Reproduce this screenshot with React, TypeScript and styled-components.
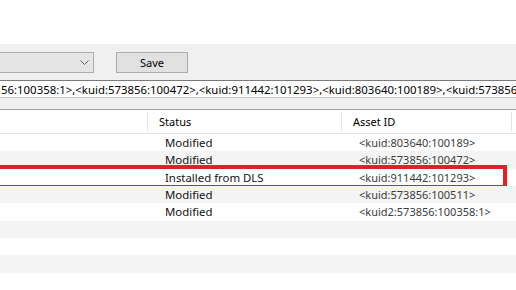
import * as React from 'react';
import styled, { createGlobalStyle } from 'styled-components';

const GlobalStyle = createGlobalStyle`
  html, body {
    margin: 0;
    padding: 0;
    background: #ffffff;
    overflow: hidden;
  }
  body {
    font-family: "Noto Sans", "Liberation Sans", sans-serif;
    color: #000;
  }
`

const ROW_HEIGHT = 17.33;

const Window = styled.div`
  width: 516px;
  height: 290px;
  overflow: hidden;
  display: flex;
  flex-direction: column;
  background: #ffffff;
`

const TopBlank = styled.div`
  height: 44px;
  background: #ffffff;
  flex-shrink: 0;
`

const Toolbar = styled.div`
  background: #f0f0f0;
  padding-top: 8px;
  height: 57px;
  flex-shrink: 0;
  display: flex;
  flex-direction: column;
  gap: 7px;
`

const ControlsRow = styled.div`
  display: flex;
  align-items: center;
  gap: 22px;
`

const Combo = styled.div`
  width: 98px;
  height: 19px;
  margin-left: -10px;
  background: #e5e5e5;
  border: 1px solid #acacac;
  display: flex;
  align-items: center;
  justify-content: flex-end;
  padding-right: 4px;
  box-sizing: content-box;
`

const SaveButton = styled.button`
  width: 72px;
  height: 21px;
  background: #e1e1e1;
  border: 1px solid #adadad;
  font-family: "Noto Sans", "Liberation Sans", sans-serif;
  font-size: 11px;
  color: #000;
  padding: 0;
  display: flex;
  align-items: center;
  justify-content: center;
`

const TextField = styled.div`
  height: 16px;
  margin-left: -4px;
  margin-right: -20px;
  background: #ffffff;
  border: 1px solid #7a7a7a;
  border-bottom-color: #c8c8c8;
  display: flex;
  align-items: center;
  padding-left: 4px;
  font-size: 11.4px;
  white-space: nowrap;
  overflow: hidden;
  box-sizing: content-box;
`

const List = styled.div`
  border-top: 1px solid #a0a0a0;
  flex: 1;
  background: #ffffff;
  position: relative;
`

const Header = styled.div`
  height: 23px;
  display: grid;
  grid-template-columns: 147px 194px 170px 5px;
  border-bottom: 1px solid #e5e5e5;
  background: #ffffff;
`

const HeaderCell = styled.div<{ $first?: boolean }>`
  display: flex;
  align-items: center;
  padding-left: 11px;
  font-size: 11px;
  border-left: ${p => (p.$first ? 'none' : '1px solid #e5e5e5')};
  margin: 2px 0;
`

const Row = styled.div<{ $alt?: boolean }>`
  height: ${ROW_HEIGHT}px;
  display: grid;
  grid-template-columns: 147px 194px 175px;
  background: ${p => (p.$alt ? '#f4f4f4' : '#ffffff')};
  position: relative;
  font-size: 11.4px;
`

const Cell = styled.div<{ $muted?: boolean }>`
  display: flex;
  align-items: center;
  padding-left: 18px;
  color: ${p => (p.$muted ? '#3c3c3c' : '#111')};
  font-size: ${p => (p.$muted ? '11px' : 'inherit')};
  white-space: nowrap;
`

const Highlight = styled.div`
  position: absolute;
  left: -10px;
  right: 9px;
  top: -3.7px;
  bottom: -3px;
  border: 4px solid #ea1c24;
  pointer-events: none;
`

const rows: { status: string; id: string }[] = [
  { status: 'Modified', id: '<kuid:803640:100189>' },
  { status: 'Modified', id: '<kuid:573856:100472>' },
  { status: 'Installed from DLS', id: '<kuid:911442:101293>' },
  { status: 'Modified', id: '<kuid:573856:100511>' },
  { status: 'Modified', id: '<kuid2:573856:100358:1>' },
  { status: '', id: '' },
  { status: '', id: '' },
  { status: '', id: '' },
  { status: '', id: '' },
];

function Chevron() {
  return (
    <svg width="9" height="6" viewBox="0 0 9 6">
      <path d="M0.5 0.5 L4.5 4.5 L8.5 0.5" fill="none" stroke="#606060" strokeWidth="1" />
    </svg>
  );
}

export default function App() {
  return (
    <>
      <GlobalStyle />
      <Window>
        <TopBlank />
        <Toolbar>
          <ControlsRow>
            <Combo><Chevron /></Combo>
            <SaveButton>Save</SaveButton>
          </ControlsRow>
          <TextField>
            56:100358:1&gt;,&lt;kuid:573856:100472&gt;,&lt;kuid:911442:101293&gt;,&lt;kuid:803640:100189&gt;,&lt;kuid:573856:100511&gt;
          </TextField>
        </Toolbar>
        <List>
          <Header>
            <HeaderCell $first />
            <HeaderCell>Status</HeaderCell>
            <HeaderCell>Asset ID</HeaderCell>
            <HeaderCell />
          </Header>
          {rows.map((r, i) => (
            <Row key={i} $alt={i % 2 === 1}>
              <Cell />
              <Cell>{r.status}</Cell>
              <Cell $muted>{r.id}</Cell>
              {r.status === 'Installed from DLS' && <Highlight />}
            </Row>
          ))}
        </List>
      </Window>
    </>
  );
}
